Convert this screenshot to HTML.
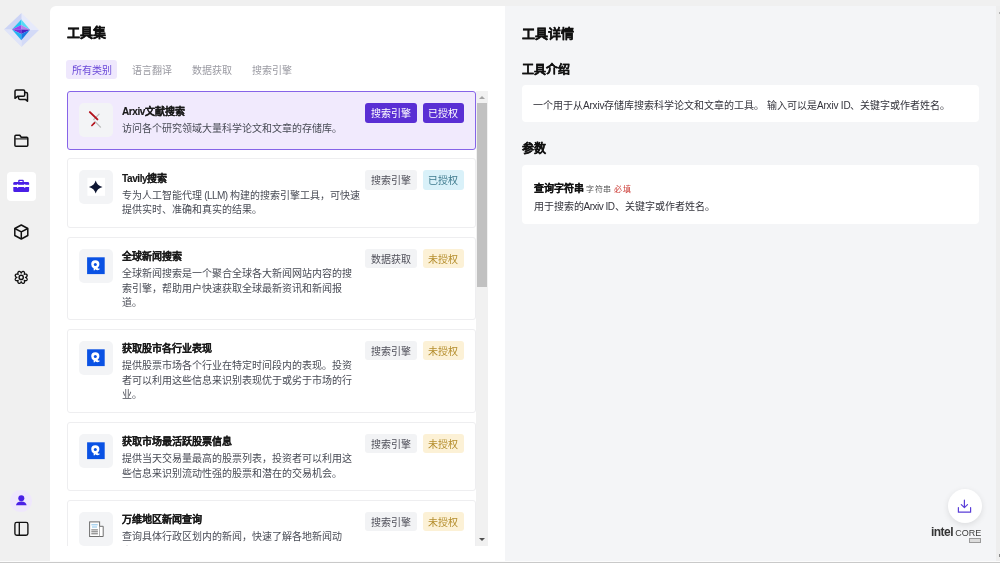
<!DOCTYPE html>
<html lang="zh-CN"><head><meta charset="utf-8">
<style>
*{margin:0;padding:0;box-sizing:border-box}
html,body{width:1000px;height:563px;overflow:hidden;background:#f0f0f0;font-family:"Liberation Sans",sans-serif;position:relative}
.a{position:absolute}
#main{position:absolute;left:50px;top:6px;width:455px;height:555px;background:#fff;border-top-left-radius:6px}
#right{position:absolute;left:505px;top:6px;width:491px;height:555px;background:#f4f5f7}
#rstrip{position:absolute;left:996px;top:6px;width:4px;height:555px;background:#eeeeee}
#bline{position:absolute;left:0;top:562px;width:1000px;height:1px;background:#c9c9c9}
.h1{font-size:13px;font-weight:bold;color:#111;line-height:16px;white-space:nowrap;-webkit-text-stroke:0.25px #111}
.tab{position:absolute;top:60px;height:19px;width:51px;border-radius:3px;font-size:10px;line-height:21px;text-align:center;color:#9a9aa2;white-space:nowrap}
.tab.on{background:#efe8fd;color:#6a48d8}
#list{position:absolute;left:67px;top:91px;width:421px;height:455px;overflow:hidden}
.card{position:absolute;left:0;width:409px;border:1px solid #eeeef0;border-radius:3px;background:#fff}
.card.sel{background:#f1eafd;border:1.5px solid #8664e8}
.ib{position:absolute;left:11px;top:11px;width:34px;height:34px;border-radius:5px;background:#f3f4f6}
.ct{position:absolute;left:54px;top:11.7px;font-size:10px;font-weight:bold;color:#1a1a1a;line-height:16px;white-space:nowrap;-webkit-text-stroke:0.15px #1a1a1a}
.cd{position:absolute;left:54px;top:29.5px;font-size:10px;color:#484b55;line-height:14.5px;white-space:nowrap}
.bd{position:absolute;top:11px;height:19.5px;border-radius:3px;font-size:10px;line-height:22px;text-align:center;white-space:nowrap}
.b1{right:58px;width:52px}
.b2{right:11px;width:41.5px}
.g{background:#f2f3f5;color:#50505a}
.p{background:#5a2fd4;color:#fff}
.c{background:#d9f1f9;color:#3f7b8e}
.y{background:#fcf1d6;color:#b48d2c}
#sb{position:absolute;left:476px;top:91px;width:12px;height:455px;background:#f1f1f1}
#thumb{position:absolute;left:1px;top:12px;width:10px;height:184px;background:#c1c1c1}
.box{position:absolute;left:522px;width:457px;background:#fff;border-radius:4px}
</style></head>
<body>
<div id="root" style="position:absolute;left:0;top:0;width:1000px;height:563px;will-change:transform">
<!-- sidebar -->
<svg class="a" style="left:0;top:8px" width="44" height="44" viewBox="0 8 44 44">
  <polygon points="21.5,13 39,30 21.5,30" fill="#e6eafb"/>
  <polygon points="21.5,13 4,29.5 21.5,30" fill="#ccd4f5"/>
  <polygon points="4,29.5 21.5,47 21.5,30" fill="#dfe4f9"/>
  <polygon points="39,30 21.5,47 21.5,30" fill="#d3daf7"/>
  <polygon points="21.3,19.5 21.3,24.9 12,29.4" fill="#22c4f0"/>
  <polygon points="21.3,19.5 30.1,29.7 21.3,24.9" fill="#55dcf6"/>
  <polygon points="21.3,24.9 12,29.4 21.3,29.6" fill="#a043ea"/>
  <polygon points="21.3,24.9 30.1,29.7 21.3,29.6" fill="#b483ea"/>
  <polygon points="12,29.4 21.3,29.6 21.3,33.9" fill="#7c2fd6"/>
  <polygon points="30.1,29.7 21.3,29.6 21.3,33.9" fill="#4b1fc2"/>
  <polygon points="12,29.4 21.3,33.9 21.3,40.3" fill="#22b2f2"/>
  <polygon points="30.1,29.7 21.3,33.9 21.3,40.3" fill="#1a7ae4"/>
</svg>
<svg class="a" style="left:10px;top:85px" width="22" height="22" viewBox="10 85 22 22" fill="none" stroke="#111" stroke-width="1.5" stroke-linejoin="round">
  <path d="M15 98.3V91.2Q15 89.9 16.3 89.9H23.4Q24.7 89.9 24.7 91.2V95Q24.7 96.3 23.4 96.3H17.5Z"/>
  <path d="M24.7 92.6H26.2Q27.5 92.6 27.5 93.9V101.3L25.3 99.4H19.8Q18.5 99.4 18.5 98.1V96.3"/>
</svg>
<svg class="a" style="left:10px;top:130px" width="22" height="22" viewBox="10 130 22 22" fill="none" stroke="#111" stroke-width="1.5" stroke-linejoin="round">
  <path d="M14.9 145.3V136.3Q14.9 135.3 15.9 135.3H19.8L21.2 137.3H26.8Q27.8 137.3 27.8 138.3V145.3Q27.8 146.3 26.8 146.3H15.9Q14.9 146.3 14.9 145.3Z"/>
  <path d="M15.2 138.9H27.5" stroke-width="1.1"/>
</svg>
<div class="a" style="left:7px;top:172px;width:28.5px;height:28.5px;background:#fff;border-radius:4px"></div>
<svg class="a" style="left:10px;top:175px" width="22" height="22" viewBox="10 175 22 22">
  <path d="M18.2 182v-1.3q0-1 1-1h3.6q1 0 1 1v1.3h-1.3v-.9h-3v.9z" fill="#4a1fe6"/>
  <rect x="13.3" y="182" width="15.8" height="10" rx="1.2" fill="#4a1fe6"/>
  <rect x="13" y="184.8" width="16.5" height="2.2" fill="#fff"/>
  <ellipse cx="17.6" cy="185.9" rx=".75" ry="2" fill="#fff"/>
  <ellipse cx="24.75" cy="185.9" rx=".75" ry="2" fill="#fff"/>
</svg>
<svg class="a" style="left:10px;top:220px" width="22" height="22" viewBox="10 220 22 22" fill="none" stroke="#111" stroke-width="1.5" stroke-linejoin="round">
  <path d="M21.3 225l6.5 3.5v7l-6.5 3.5-6.5-3.5v-7z"/>
  <path d="M14.8 228.5l6.5 3.3 6.5-3.3M21.3 231.8v7.2"/>
</svg>
<svg class="a" style="left:10px;top:266px" width="22" height="22" viewBox="10 266 22 22" fill="none" stroke="#111" stroke-width="1.3" stroke-linejoin="round">
  <path d="M21.20 273.10 L21.29 272.83 L21.39 272.64 L21.49 272.47 L21.60 272.31 L21.71 272.17 L21.83 272.05 L21.96 271.93 L22.08 271.83 L22.21 271.74 L22.34 271.66 L22.47 271.59 L22.61 271.54 L22.74 271.49 L22.87 271.46 L23.01 271.44 L23.14 271.44 L23.27 271.44 L23.39 271.46 L23.51 271.49 L23.63 271.53 L23.74 271.59 L23.85 271.65 L23.95 271.73 L24.05 271.81 L24.13 271.91 L24.21 272.02 L24.29 272.13 L24.35 272.26 L24.41 272.39 L24.45 272.53 L24.49 272.68 L24.52 272.84 L24.53 273.00 L24.54 273.17 L24.53 273.34 L24.51 273.52 L24.48 273.71 L24.43 273.90 L24.37 274.11 L24.24 274.36 L24.49 274.23 L24.70 274.17 L24.89 274.12 L25.08 274.09 L25.26 274.07 L25.43 274.06 L25.60 274.07 L25.76 274.08 L25.92 274.11 L26.07 274.15 L26.21 274.19 L26.34 274.25 L26.47 274.31 L26.58 274.39 L26.69 274.47 L26.79 274.55 L26.87 274.65 L26.95 274.75 L27.01 274.86 L27.07 274.97 L27.11 275.09 L27.14 275.21 L27.16 275.33 L27.16 275.46 L27.16 275.59 L27.14 275.73 L27.11 275.86 L27.06 275.99 L27.01 276.13 L26.94 276.26 L26.86 276.39 L26.77 276.52 L26.67 276.64 L26.55 276.77 L26.43 276.89 L26.29 277.00 L26.13 277.11 L25.96 277.21 L25.77 277.31 L25.50 277.40 L25.77 277.49 L25.96 277.59 L26.13 277.69 L26.29 277.80 L26.43 277.91 L26.55 278.03 L26.67 278.16 L26.77 278.28 L26.86 278.41 L26.94 278.54 L27.01 278.67 L27.06 278.81 L27.11 278.94 L27.14 279.07 L27.16 279.21 L27.16 279.34 L27.16 279.47 L27.14 279.59 L27.11 279.71 L27.07 279.83 L27.01 279.94 L26.95 280.05 L26.87 280.15 L26.79 280.25 L26.69 280.33 L26.58 280.41 L26.47 280.49 L26.34 280.55 L26.21 280.61 L26.07 280.65 L25.92 280.69 L25.76 280.72 L25.60 280.73 L25.43 280.74 L25.26 280.73 L25.08 280.71 L24.89 280.68 L24.70 280.63 L24.49 280.57 L24.24 280.44 L24.37 280.69 L24.43 280.90 L24.48 281.09 L24.51 281.28 L24.53 281.46 L24.54 281.63 L24.53 281.80 L24.52 281.96 L24.49 282.12 L24.45 282.27 L24.41 282.41 L24.35 282.54 L24.29 282.67 L24.21 282.78 L24.13 282.89 L24.05 282.99 L23.95 283.07 L23.85 283.15 L23.74 283.21 L23.63 283.27 L23.51 283.31 L23.39 283.34 L23.27 283.36 L23.14 283.36 L23.01 283.36 L22.87 283.34 L22.74 283.31 L22.61 283.26 L22.47 283.21 L22.34 283.14 L22.21 283.06 L22.08 282.97 L21.96 282.87 L21.83 282.75 L21.71 282.63 L21.60 282.49 L21.49 282.33 L21.39 282.16 L21.29 281.97 L21.20 281.70 L21.11 281.97 L21.01 282.16 L20.91 282.33 L20.80 282.49 L20.69 282.63 L20.57 282.75 L20.44 282.87 L20.32 282.97 L20.19 283.06 L20.06 283.14 L19.93 283.21 L19.79 283.26 L19.66 283.31 L19.53 283.34 L19.39 283.36 L19.26 283.36 L19.13 283.36 L19.01 283.34 L18.89 283.31 L18.77 283.27 L18.66 283.21 L18.55 283.15 L18.45 283.07 L18.35 282.99 L18.27 282.89 L18.19 282.78 L18.11 282.67 L18.05 282.54 L17.99 282.41 L17.95 282.27 L17.91 282.12 L17.88 281.96 L17.87 281.80 L17.86 281.63 L17.87 281.46 L17.89 281.28 L17.92 281.09 L17.97 280.90 L18.03 280.69 L18.16 280.44 L17.91 280.57 L17.70 280.63 L17.51 280.68 L17.32 280.71 L17.14 280.73 L16.97 280.74 L16.80 280.73 L16.64 280.72 L16.48 280.69 L16.33 280.65 L16.19 280.61 L16.06 280.55 L15.93 280.49 L15.82 280.41 L15.71 280.33 L15.61 280.25 L15.53 280.15 L15.45 280.05 L15.39 279.94 L15.33 279.83 L15.29 279.71 L15.26 279.59 L15.24 279.47 L15.24 279.34 L15.24 279.21 L15.26 279.07 L15.29 278.94 L15.34 278.81 L15.39 278.67 L15.46 278.54 L15.54 278.41 L15.63 278.28 L15.73 278.16 L15.85 278.03 L15.97 277.91 L16.11 277.80 L16.27 277.69 L16.44 277.59 L16.63 277.49 L16.90 277.40 L16.63 277.31 L16.44 277.21 L16.27 277.11 L16.11 277.00 L15.97 276.89 L15.85 276.77 L15.73 276.64 L15.63 276.52 L15.54 276.39 L15.46 276.26 L15.39 276.13 L15.34 275.99 L15.29 275.86 L15.26 275.73 L15.24 275.59 L15.24 275.46 L15.24 275.33 L15.26 275.21 L15.29 275.09 L15.33 274.97 L15.39 274.86 L15.45 274.75 L15.53 274.65 L15.61 274.55 L15.71 274.47 L15.82 274.39 L15.93 274.31 L16.06 274.25 L16.19 274.19 L16.33 274.15 L16.48 274.11 L16.64 274.08 L16.80 274.07 L16.97 274.06 L17.14 274.07 L17.32 274.09 L17.51 274.12 L17.70 274.17 L17.91 274.23 L18.16 274.36 L18.03 274.11 L17.97 273.90 L17.92 273.71 L17.89 273.52 L17.87 273.34 L17.86 273.17 L17.87 273.00 L17.88 272.84 L17.91 272.68 L17.95 272.53 L17.99 272.39 L18.05 272.26 L18.11 272.13 L18.19 272.02 L18.27 271.91 L18.35 271.81 L18.45 271.73 L18.55 271.65 L18.66 271.59 L18.77 271.53 L18.89 271.49 L19.01 271.46 L19.13 271.44 L19.26 271.44 L19.39 271.44 L19.53 271.46 L19.66 271.49 L19.79 271.54 L19.93 271.59 L20.06 271.66 L20.19 271.74 L20.32 271.83 L20.44 271.93 L20.57 272.05 L20.69 272.17 L20.80 272.31 L20.91 272.47 L21.01 272.64 L21.11 272.83Z"/>
  <circle cx="21.2" cy="277.4" r="2.1" stroke-width="1.4"/>
</svg>
<div class="a" style="left:9.5px;top:489.5px;width:22.5px;height:22.5px;border-radius:50%;background:#efe7fc"></div>
<svg class="a" style="left:10px;top:490px" width="22" height="22" viewBox="10 490 22 22" fill="#4a1fe6">
  <circle cx="21.3" cy="498.2" r="3"/>
  <path d="M16 505.3q0.5-3.6 5.3-3.8q4.8 0.2 5.3 3.8z"/>
</svg>
<svg class="a" style="left:10px;top:518px" width="22" height="22" viewBox="10 518 22 22" fill="none" stroke="#111" stroke-width="1.35">
  <rect x="14.9" y="522.4" width="13" height="12.8" rx="1.8"/>
  <path d="M19.3 522.4v12.8"/>
</svg>

<div id="main"></div>
<div id="right"></div>
<div id="rstrip"></div>
<div class="a" style="left:0;top:561px;width:1000px;height:1px;background:#fcfcfc"></div><div id="bline"></div>
<div class="a" style="left:998.5px;top:11.8px;width:1.5px;height:2.6px;background:#9e9e9e;border-radius:1px 0 0 1px"></div>

<div class="a h1" style="left:67px;top:25px">工具集</div>
<div class="tab on" style="left:66.2px">所有类别</div>
<div class="tab" style="left:126.2px">语言翻译</div>
<div class="tab" style="left:186.2px">数据获取</div>
<div class="tab" style="left:246.2px">搜索引擎</div>

<div id="list">
  <div class="card sel" style="top:0;height:59px">
    <div class="ib"><svg width="34" height="34" viewBox="79.5 103.5 34 34">
      <path d="M99.6 114.6L94.2 120.1M95.3 121.9L101.0 127.6" stroke="#b9b9b9" stroke-width="1.3" stroke-linecap="round"/>
      <path d="M90.4 112.6L97.9 119.9" stroke="#b3121c" stroke-width="2" stroke-linecap="round"/>
      <path d="M92.4 126.0L95.0 123.4" stroke="#b3121c" stroke-width="1.7" stroke-linecap="round"/>
    </svg></div>
    <div class="ct"><span style="letter-spacing:-0.4px">Arxiv</span>文献搜索</div>
    <div class="cd">访问各个研究领域大量科学论文和文章的存储库。</div>
    <div class="bd b1 p">搜索引擎</div><div class="bd b2 p">已授权</div>
  </div>
  <div class="card" style="top:67px;height:69.5px">
    <div class="ib"><svg width="34" height="34" viewBox="79 170 34 34">
      <rect x="87.4" y="177.8" width="17.6" height="18" fill="#fff"/>
      <path d="M95.7 180.6Q97.1 185.6 102.5 187.1Q97.1 188.5 95.7 193.6Q94.3 188.5 88.9 187.1Q94.3 185.6 95.7 180.6z" fill="#0f1733"/>
    </svg></div>
    <div class="ct"><span style="letter-spacing:-0.4px">Tavily</span>搜索</div>
    <div class="cd">专为人工智能代理<span style="letter-spacing:-0.55px"> (LLM) </span>构建的搜索引擎工具，可快速<br>提供实时、准确和真实的结果。</div>
    <div class="bd b1 g">搜索引擎</div><div class="bd b2 c">已授权</div>
  </div>
  <div class="card" style="top:145.7px;height:83px">
    <div class="ib"><svg width="34" height="34" viewBox="79 248.7 34 34"><use href="#q"/></svg></div>
    <div class="ct">全球新闻搜索</div>
    <div class="cd">全球新闻搜索是一个聚合全球各大新闻网站内容的搜<br>索引擎，帮助用户快速获取全球最新资讯和新闻报<br>道。</div>
    <div class="bd b1 g">数据获取</div><div class="bd b2 y">未授权</div>
  </div>
  <div class="card" style="top:237.5px;height:84.5px">
    <div class="ib"><svg width="34" height="34" viewBox="79 248.7 34 34"><use href="#q"/></svg></div>
    <div class="ct">获取股市各行业表现</div>
    <div class="cd">提供股票市场各个行业在特定时间段内的表现。投资<br>者可以利用这些信息来识别表现优于或劣于市场的行<br>业。</div>
    <div class="bd b1 g">搜索引擎</div><div class="bd b2 y">未授权</div>
  </div>
  <div class="card" style="top:330.5px;height:69px">
    <div class="ib"><svg width="34" height="34" viewBox="79 248.7 34 34"><use href="#q"/></svg></div>
    <div class="ct">获取市场最活跃股票信息</div>
    <div class="cd">提供当天交易量最高的股票列表，投资者可以利用这<br>些信息来识别流动性强的股票和潜在的交易机会。</div>
    <div class="bd b1 g">搜索引擎</div><div class="bd b2 y">未授权</div>
  </div>
  <div class="card" style="top:408.5px;height:83px">
    <div class="ib"><svg width="34" height="34" viewBox="79 511.5 34 34">
      <rect x="89.6" y="521.4" width="10" height="14.6" fill="#fff" stroke="#6e6e6e" stroke-width="1"/>
      <path d="M99.6 525.8h3.6v10.2h-3.6" fill="#fff" stroke="#6e6e6e" stroke-width="1"/>
      <path d="M91.4 524.3h6.4M92 526.5h5" stroke="#7cbce8" stroke-width=".9"/>
      <path d="M91.3 529.4h6.6M91.3 531.3h6.6M91.3 533.3h6.6" stroke="#707070" stroke-width="1"/>
    </svg></div>
    <div class="ct">万维地区新闻查询</div>
    <div class="cd">查询具体行政区划内的新闻，快速了解各地新闻动<br>态。</div>
    <div class="bd b1 g">搜索引擎</div><div class="bd b2 y">未授权</div>
  </div>
</div>
<svg width="0" height="0" style="position:absolute">
  <defs><g id="q">
    <rect x="87.1" y="257" width="17.6" height="16.8" fill="#0a52e4"/>
    <path d="M95.3 260Q99.4 260 99.4 264Q99.4 266.5 97.5 267.6Q98.3 268.6 100.2 268.3Q99.4 269.9 97.5 269.9Q96.2 269.9 95.5 269Q94.7 270.3 93.8 270.3Q93.6 269.1 93.6 268Q91.2 266.8 91.2 264Q91.2 260 95.3 260z" fill="#fff"/>
    <circle cx="95.3" cy="264.1" r="1.5" fill="#0a52e4"/>
  </g></defs>
</svg>
<div id="sb">
  <svg class="a" style="left:0;top:0" width="12" height="12"><path d="M3 8h6l-3-3z" fill="#a3a3a3"/></svg>
  <div id="thumb"></div>
  <svg class="a" style="left:0;top:443px" width="12" height="12"><path d="M3 4h6l-3 3z" fill="#505050"/></svg>
</div>

<!-- right panel -->
<div class="a h1" style="left:522px;top:26px">工具详情</div>
<div class="a h1" style="left:522px;top:61.5px;font-size:12px">工具介绍</div>
<div class="box" style="top:85.3px;height:37px"></div>
<div class="a" style="left:533px;top:99px;font-size:10px;line-height:14px;color:#33333b;white-space:nowrap">一个用于从<span style="letter-spacing:-0.2px">Arxiv</span>存储库搜索科学论文和文章的工具。 输入可以是<span style="letter-spacing:-0.2px">Arxiv ID</span>、关键字或作者姓名。</div>
<div class="a h1" style="left:522px;top:141px;font-size:12px">参数</div>
<div class="box" style="top:165.3px;height:59px"></div>
<div class="a" style="left:533.5px;top:182px;font-size:10px;line-height:14px;white-space:nowrap"><b style="color:#111;-webkit-text-stroke:0.15px #111">查询字符串</b> <span style="font-size:8px;letter-spacing:.4px;color:#555">字符串</span> <span style="font-size:8px;letter-spacing:.4px;color:#cc3b35">必填</span></div>
<div class="a" style="left:533.5px;top:200px;font-size:10px;line-height:14px;color:#33333b;white-space:nowrap">用于搜索的<span style="letter-spacing:-0.5px">Arxiv ID</span>、关键字或作者姓名。</div>

<div class="a" style="left:947.5px;top:489.3px;width:34px;height:34px;border-radius:50%;background:#fff;box-shadow:0 2px 6px rgba(0,0,0,.10)"></div>
<svg class="a" style="left:950px;top:492px" width="28" height="28" viewBox="950 492 28 28" fill="none" stroke="#5a3ed8" stroke-width="1.2" stroke-linecap="round" stroke-linejoin="round">
  <path d="M964.4 500.2v7.2M961.3 504.6l3.1 3 3.1-3M958.4 507.6v4.6h12.2v-4.6"/>
</svg>
<div class="a" style="left:931px;top:526px;font-size:12px;line-height:12px;font-weight:bold;letter-spacing:-0.55px;color:#333;white-space:nowrap">intel</div>
<div class="a" style="left:955.2px;top:528.9px;font-size:9px;line-height:9px;color:#3c3c3c;white-space:nowrap">CORE</div>
<div class="a" style="left:969px;top:538.4px;width:12.2px;height:4.4px;border:0.8px solid #9a9a9a;background:#dcdcdc"></div>
<div class="a" style="left:998.8px;top:554.3px;width:1.2px;height:2.4px;background:#8a8a8a"></div>
</div>
</body></html>
